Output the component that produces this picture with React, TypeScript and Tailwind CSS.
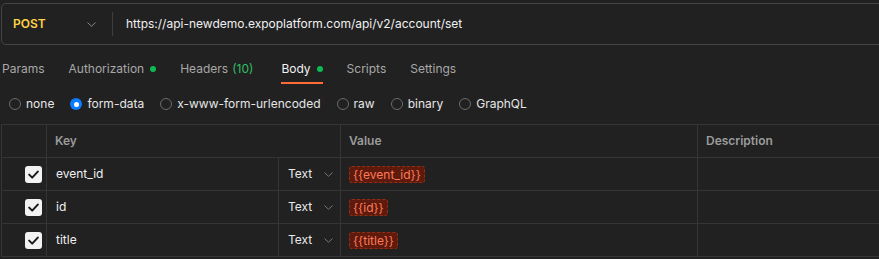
import React from "react";

const Chevron = ({ className = "" }: { className?: string }) => (
  <svg width="9" height="5" viewBox="0 0 9 5" className={className} fill="none">
    <path d="M0.8 0.8l3.7 3.5 3.7-3.5" stroke="currentColor" strokeWidth="1" strokeLinecap="round" strokeLinejoin="round" />
  </svg>
);

const Checkbox = () => (
  <div className="w-[17px] h-[17px] rounded-[3px] bg-[#f2f2f2] flex items-center justify-center">
    <svg width="11" height="9" viewBox="0 0 11 9" fill="none">
      <path d="M1.2 4.6l3 3L9.8 1.6" stroke="#1a1a1a" strokeWidth="2" strokeLinecap="round" strokeLinejoin="round" />
    </svg>
  </div>
);

const Radio = ({ checked, label }: { checked?: boolean; label: string }) => (
  <div className="flex items-center gap-[5px]">
    {checked ? (
      <div className="w-[12px] h-[12px] rounded-full bg-[#0a7cff] flex items-center justify-center">
        <div className="w-[5px] h-[5px] rounded-full bg-white" />
      </div>
    ) : (
      <div className="w-[12px] h-[12px] rounded-full border border-[#6b6b6b]" />
    )}
    <span className="text-[12px] text-[#e6e6e6]">{label}</span>
  </div>
);

const rows = [
  { key: "event_id", value: "{{event_id}}" },
  { key: "id", value: "{{id}}" },
  { key: "title", value: "{{title}}" },
];

export default function App() {
  return (
    <div className="w-[879px] h-[259px] bg-[#212121] overflow-hidden font-['Inter','Liberation_Sans',sans-serif]">
      {/* URL bar */}
      <div className="pt-[3px] pl-[1px]">
        <div className="w-[920px] h-[42px] border border-[#444444] rounded-[5px] flex items-center">
          <div className="w-[110px] flex items-center pl-[11px] pr-[16px] justify-between">
            <span className="text-[12px] font-semibold text-[#ffd24a]">POST</span>
            <Chevron className="text-[#8a8a8a]" />
          </div>
          <div className="w-px h-[24px] bg-[#3d3d3d]" />
          <span className="pl-[13px] text-[12px] text-[#f0f0f0]">https://api-newdemo.expoplatform.com/api/v2/account/set</span>
        </div>
      </div>

      {/* Tabs */}
      <div className="mt-[8px] h-[32px] flex items-stretch pl-[2px] gap-[24px] text-[12px] text-[#a8a8a8]">
        <div className="flex items-center">Params</div>
        <div className="flex items-center gap-[6px]">
          Authorization
          <span className="w-[6px] h-[6px] rounded-full bg-[#0cbb52]" />
        </div>
        <div className="flex items-center gap-[4px]">
          Headers <span className="text-[#2fbf63]">(10)</span>
        </div>
        <div className="relative flex items-center gap-[6px] text-[#f2f2f2] ml-[4px]">
          Body
          <span className="w-[6px] h-[6px] rounded-full bg-[#0cbb52]" />
          <div className="absolute left-0 right-0 bottom-[1px] h-[2px] bg-[#ff6c37]" />
        </div>
        <div className="flex items-center">Scripts</div>
        <div className="flex items-center">Settings</div>
      </div>

      {/* Radio row */}
      <div className="h-[38px] flex items-center pl-[9px] gap-[16px]">
        <Radio label="none" />
        <Radio checked label="form-data" />
        <Radio label="x-www-form-urlencoded" />
        <Radio label="raw" />
        <Radio label="binary" />
        <Radio label="GraphQL" />
      </div>

      {/* Table */}
      <div className="mt-[1px] ml-[1px] w-[900px] border-t border-[#353535] text-[12px]">
        <div className="flex h-[33px] border-b border-[#353535]">
          <div className="w-[46px] border-l border-r border-[#353535]" />
          <div className="w-[294px] border-r border-[#353535] flex items-center pl-[8px] font-semibold text-[#9b9b9b]">Key</div>
          <div className="w-[357px] border-r border-[#353535] flex items-center pl-[8px] font-semibold text-[#9b9b9b]">Value</div>
          <div className="flex-1 flex items-center pl-[8px] font-semibold text-[#9b9b9b]">Description</div>
        </div>
        {rows.map((r) => (
          <div key={r.key} className="flex h-[33px] border-b border-[#353535]">
            <div className="w-[46px] border-l border-r border-[#353535] flex items-center justify-end pr-[4px]">
              <Checkbox />
            </div>
            <div className="w-[232px] border-r border-[#353535] flex items-center pl-[9px] text-[#f0f0f0]">{r.key}</div>
            <div className="w-[62px] border-r border-[#353535] flex items-center pl-[9px] gap-[12px] text-[#e8e8e8]">
              Text
              <Chevron className="text-[#777777]" />
            </div>
            <div className="w-[357px] border-r border-[#353535] flex items-center pl-[8px]">
              <span className="h-[17px] px-[3px] rounded-[3px] bg-[#5e1a0c] border border-dashed border-[#8e2f18] text-[#ff7a5a] leading-[15px] flex items-center">
                {r.value}
              </span>
            </div>
            <div className="flex-1" />
          </div>
        ))}
      </div>
    </div>
  );
}
